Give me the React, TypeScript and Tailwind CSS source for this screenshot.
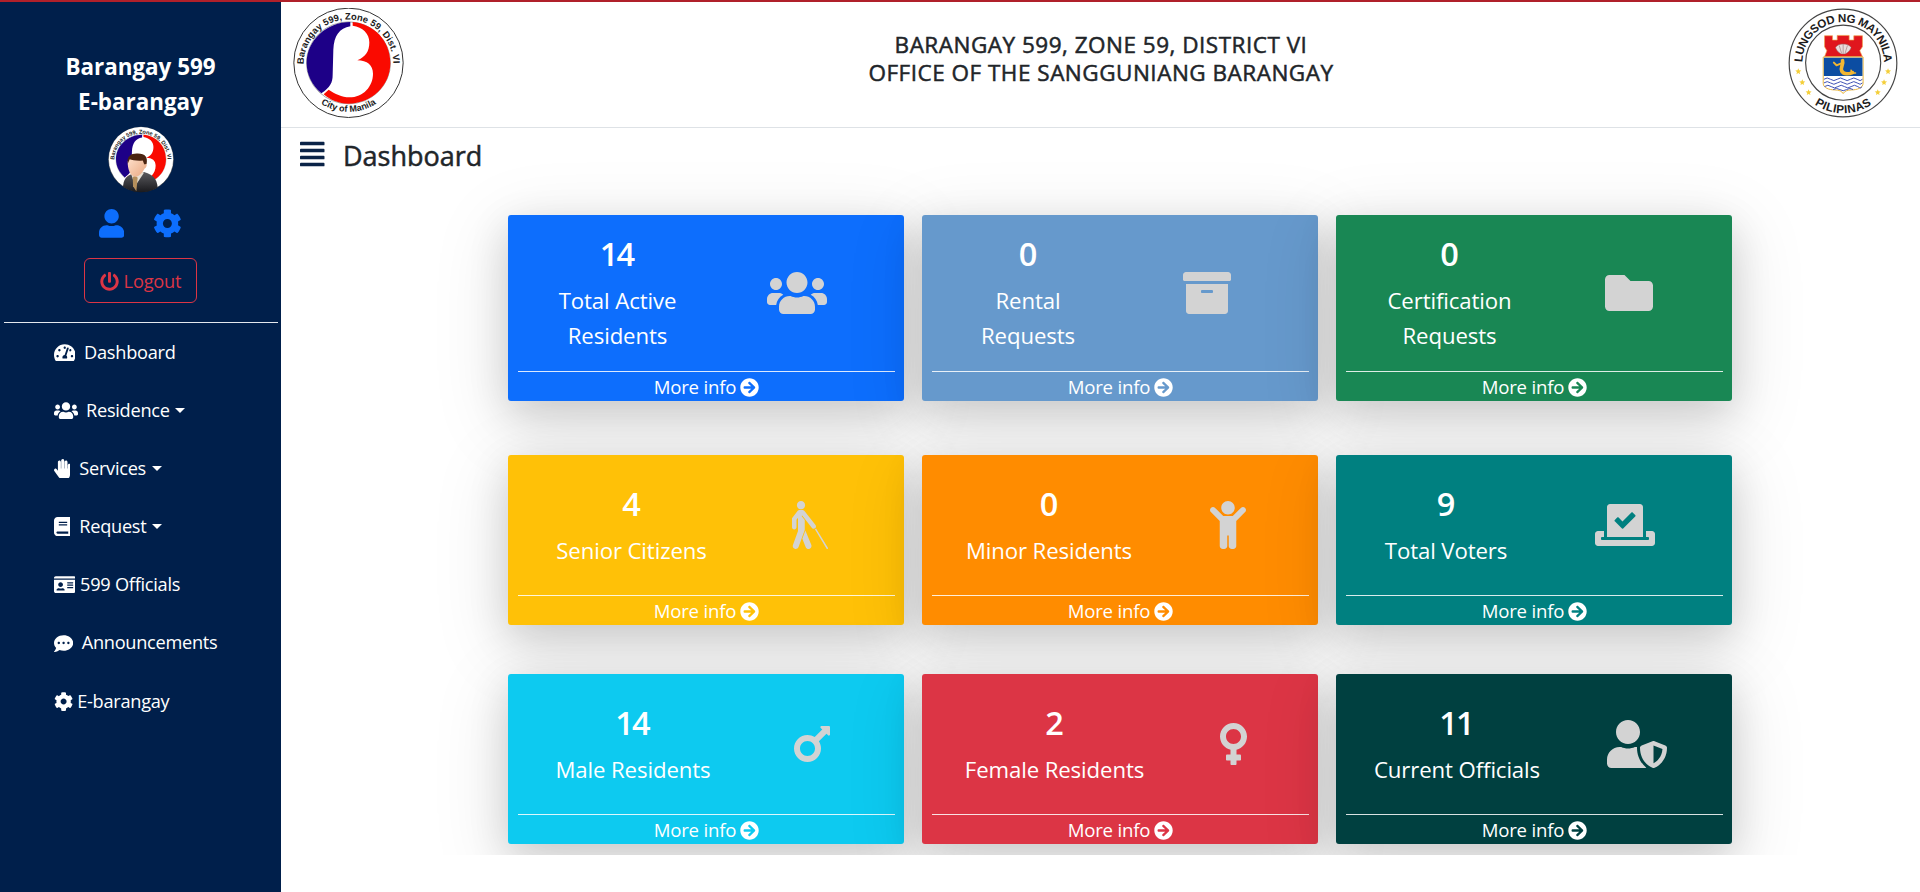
import type { ReactNode } from "react";
import type { IconType } from "react-icons";
import {
  FaAlignJustify,
  FaArchive,
  FaArrowCircleRight,
  FaBlind,
  FaBook,
  FaChild,
  FaCog,
  FaCommentDots,
  FaFolder,
  FaHandPaper,
  FaIdCard,
  FaMars,
  FaPowerOff,
  FaTachometerAlt,
  FaUser,
  FaUserShield,
  FaUsers,
  FaVenus,
  FaVoteYea,
} from "react-icons/fa";

function BarangayEmblem() {
  return (
    <>
      <circle cx="205.5" cy="189.5" r="164" fill="#fff" stroke="#333" strokeWidth="3" />
      <ellipse cx="205.5" cy="189.5" rx="126" ry="123" fill="#fff" stroke="#555" strokeWidth="1.5" />
      <path
        d="M211 67 C140 67 80 122 80 190 C80 226 97 258 124 281 C150 262 158 250 158 225 L160 150 C162 108 178 86 211 80 Z"
        fill="#1d0087"
      />
      <path
        d="M218 67 C280 72 331 122 331 190 C331 258 275 312 205 312 C176 312 150 301 131 284 L146 270 C165 283 185 292 208 293 C250 293 279 260 279 222 C279 196 262 183 232 182 C256 172 268 156 268 128 C268 102 248 82 218 78 Z"
        fill="#fa0a00"
      />
    </>
  );
}

function BarangayLogo() {
  return (
    <svg viewBox="39 25 333 330" className="h-[110px] w-[111px]">
      <BarangayEmblem />
      <path id="b-top" d="M71 194 A134.5 134.5 0 0 1 340 194" fill="none" />
      <path id="b-bottom" d="M96 290 A152 152 0 0 0 315 290" fill="none" />
      <g fontFamily="Liberation Sans, sans-serif" fontWeight="700" fontSize="28" fill="#222">
        <text>
          <textPath href="#b-top" textLength="420">Barangay 599, Zone 59, Dist. VI</textPath>
        </text>
        <text textAnchor="middle" fontSize="27">
          <textPath href="#b-bottom" startOffset="50%">City of Manila</textPath>
        </text>
      </g>
    </svg>
  );
}

function Avatar() {
  return (
    <svg viewBox="322 378 198 202" className="h-[67px] w-[66px]">
      <defs>
        <clipPath id="avatar-clip">
          <circle cx="421" cy="479" r="99" />
        </clipPath>
        <linearGradient id="suit" x1="0" y1="0" x2="0" y2="1">
          <stop offset="0" stopColor="#5a5a5e" />
          <stop offset="1" stopColor="#17171b" />
        </linearGradient>
        <linearGradient id="skin" x1="0" y1="0" x2="1" y2="1">
          <stop offset="0" stopColor="#ffe3cf" />
          <stop offset="1" stopColor="#e9a67f" />
        </linearGradient>
      </defs>
      <g clipPath="url(#avatar-clip)">
        <g transform="translate(297.7 364.3) scale(0.6)">
          <BarangayEmblem />
        </g>
        <path id="a-top" d="M341 480 A80 79 0 0 1 501 480" fill="none" />
        <text fontFamily="Liberation Sans, sans-serif" fontWeight="700" fontSize="17" fill="#222">
          <textPath href="#a-top" textLength="248">Barangay 599, Zone 59, Dist. VI</textPath>
        </text>
        <path d="M366 580 C366 545 370 530 397 522 L430 517 C462 527 472 540 472 580 Z" fill="url(#suit)" />
        <path d="M392 524 L403 560 L430 519 L415 512 Z" fill="#e8e0d4" />
        <path d="M396 532 L404 528 L411 534 L407 575 L397 560 Z" fill="#b58f5c" />
        <path
          d="M381 484 C380 506 388 530 404 531 C418 530 428 514 432 506 C439 503 441 490 434 488 L428 470 L388 470 Z"
          fill="url(#skin)"
        />
        <path d="M381 492 C378 470 390 461 408 461 C434 460 442 472 438 492 L432 494 C428 490 429 486 426 482 C408 484 394 480 387 478 Z" fill="#4a2411" />
      </g>
    </svg>
  );
}

const STARS = [
  [85, 212],
  [97, 245],
  [116, 275],
  [355, 212],
  [343, 245],
  [324, 275],
];

function ManilaSeal() {
  return (
    <svg viewBox="54 22 331 330" className="h-[110px] w-[110px]">
      <circle cx="219.5" cy="187" r="162" fill="#fff" stroke="#444" strokeWidth="3.5" />
      <circle cx="220" cy="186" r="113" fill="#fff" stroke="#444" strokeWidth="3.5" />
      <path id="m-top" d="M97 187 A123 123 0 0 1 343 187" fill="none" />
      <path id="m-bottom" d="M108 289 A152 152 0 0 0 332 289" fill="none" />
      <g fontFamily="Liberation Sans, sans-serif" fontWeight="700" fontSize="35" fill="#1c1c1c">
        <text>
          <textPath href="#m-top" startOffset="2" textLength="383">LUNGSOD NG MAYNILA</textPath>
        </text>
        <text textAnchor="middle">
          <textPath href="#m-bottom" startOffset="50%" textLength="182">PILIPINAS</textPath>
        </text>
      </g>
      {STARS.map(([x, y]) => (
        <path
          key={`${x}-${y}`}
          transform={`translate(${x} ${y})`}
          d="M0 -9 L2.5 -3 L9 -2.5 L4 2 L5.5 8.5 L0 5 L-5.5 8.5 L-4 2 L-9 -2.5 L-2.5 -3 Z"
          fill="#f4cf3a"
        />
      ))}
      <path
        d="M164 168 L171 150 L164 138 V105 H188 V118 H202 V104 H238 V118 H252 V105 H278 V138 L270 150 L278 168 Z"
        fill="#e0161d"
        stroke="#f0a24a"
        strokeWidth="2"
      />
      <path
        d="M197 140 C205 126 235 126 244 140 C240 152 230 160 220 160 C210 160 201 152 197 140 Z"
        fill="#e9dcdc"
        stroke="#8c5a5a"
        strokeWidth="1.5"
      />
      <path d="M208 134 L215 157 M220 130 V159 M233 134 L226 157" stroke="#8c5a5a" strokeWidth="1.5" />
      <path
        d="M160 169 H280 V248 C280 262 262 268 245 268 C232 268 224 272 220 279 C216 272 208 268 195 268 C178 268 160 262 160 248 Z"
        fill="#fff"
        stroke="#e8b53c"
        strokeWidth="3"
      />
      <path d="M162 171 H278 V226 H162 Z" fill="#0c4da2" />
      <g fill="none" stroke="#f2b632" strokeLinecap="round" strokeLinejoin="round">
        <path d="M218 180 C222 192 210 200 216 212 C222 222 238 220 248 216" strokeWidth="11" />
        <path d="M214 188 L200 194 L192 186" strokeWidth="6" />
        <path d="M246 217 L244 209 M246 217 L257 217" strokeWidth="5" />
      </g>
      <g fill="none" stroke="#3f51b5" strokeWidth="3">
        <path d="M162 236 q10 -8 20 0 t20 0 t20 0 t20 0 t20 0 t16 0" />
        <path d="M162 247 q10 -8 20 0 t20 0 t20 0 t20 0 t20 0 t16 0" />
        <path d="M164 258 q10 -8 20 0 t20 0 t20 0 t20 0 t20 0 t12 0" />
        <path d="M190 267 q10 -7 20 0 t20 0 t20 0" />
      </g>
    </svg>
  );
}

type NavItem = { label: string; icon: IconType; size: string; caret?: boolean };

const NAV: NavItem[] = [
  { label: "Dashboard", icon: FaTachometerAlt, size: "w-[21.6px] mr-[9px]" },
  { label: "Residence", icon: FaUsers, size: "w-[24px] mr-[8.5px]", caret: true },
  { label: "Services", icon: FaHandPaper, size: "w-[16.8px] mr-[9px]", caret: true },
  { label: "Request", icon: FaBook, size: "w-[16.8px] mr-[9px]", caret: true },
  { label: "599 Officials", icon: FaIdCard, size: "w-[21.6px] mr-[5px]" },
  { label: "Announcements", icon: FaCommentDots, size: "w-[19.2px] mr-[9px]" },
  { label: "E-barangay", icon: FaCog, size: "w-[19.2px] mr-[4.5px]" },
];

function Sidebar() {
  return (
    <aside className="flex w-[281px] shrink-0 flex-col items-center bg-[#001f4b] pt-[47px] text-white">
      <div className="text-center text-[22.4px] leading-[35px] font-bold">
        <div>Barangay 599</div>
        <div>E-barangay</div>
      </div>
      <div className="mt-[7px]">
        <Avatar />
      </div>
      <div className="mt-[16px] flex gap-[29px] text-[#0d6efd]">
        <FaUser className="h-[28.8px] w-[25.2px]" />
        <FaCog className="h-[28.8px] w-[28.8px]" />
      </div>
      <button className="mt-[20px] flex h-[45px] w-[113px] items-center justify-center rounded-md border border-[#dc3545] pt-[2px] text-[18.2px] tracking-[-0.01em] text-[#dc3545]">
        <FaPowerOff className="size-[19px]" />
        <span className="ml-[5px]">Logout</span>
      </button>
      <div className="mt-[19px] h-px w-[274px] bg-[#e4e8ee]" />
      <nav className="flex w-full flex-col pt-[0.3px] pl-[53.5px]">
        {NAV.map(({ label, icon: Icon, size, caret }) => (
          <a key={label} className="flex h-[58.2px] items-center text-[18.2px] tracking-[-0.015em]">
            <Icon className={`h-[19.2px] shrink-0 ${size}`} />
            <span>{label}</span>
            {caret && (
              <span className="ml-[5.5px] border-x-[5.5px] border-t-[5.5px] border-x-transparent border-t-white" />
            )}
          </a>
        ))}
      </nav>
    </aside>
  );
}

type Stat = {
  value: string;
  label: ReactNode;
  icon: IconType;
  color: string;
  text: string;
  size: string;
};

const TOP: Stat[] = [
  { value: "14", label: <>Total Active<br />Residents</>, icon: FaUsers, color: "bg-[#0d6efd]", text: "w-[219px] pb-[2px]", size: "ml-[40px] w-[60px]" },
  { value: "0", label: <>Rental<br />Requests</>, icon: FaArchive, color: "bg-[#6699cc]", text: "w-[212px] pb-[2px]", size: "ml-[49px] w-[48px]" },
  { value: "0", label: <>Certification<br />Requests</>, icon: FaFolder, color: "bg-[#198754]", text: "w-[227px] pb-[2px]", size: "ml-[42px] w-[48px]" },
];

const MIDDLE: Stat[] = [
  { value: "4", label: "Senior Citizens", icon: FaBlind, color: "bg-[#ffc107]", text: "w-[247px]", size: "ml-[37px] w-[36px]" },
  { value: "0", label: "Minor Residents", icon: FaChild, color: "bg-[#ff8c00]", text: "w-[254px]", size: "ml-[34px] w-[36px]" },
  { value: "9", label: "Total Voters", icon: FaVoteYea, color: "bg-[#008080]", text: "w-[220px]", size: "ml-[39px] w-[60px]" },
];

const BOTTOM: Stat[] = [
  { value: "14", label: "Male Residents", icon: FaMars, color: "bg-[#0dcaf0]", text: "w-[250px]", size: "ml-[36px] w-[36px]" },
  { value: "2", label: "Female Residents", icon: FaVenus, color: "bg-[#dc3545]", text: "w-[265px]", size: "ml-[33px] w-[27px]" },
  { value: "11", label: "Current Officials", icon: FaUserShield, color: "bg-[#004040]", text: "w-[242px]", size: "ml-[29px] w-[60px]" },
];

function StatCard({ value, label, icon: Icon, color, text, size }: Stat) {
  return (
    <div
      className={`relative flex w-[396px] flex-col rounded-[3px] text-white shadow-[0_12px_40px_rgba(0,0,0,0.14),0_18px_72px_8px_rgba(0,0,0,0.1)] ${color}`}
    >
      <div className="flex flex-1 items-center">
        <div className={`text-center ${text}`}>
          <div className="mb-[7px] pr-[2px] text-[32.5px] leading-[44px] font-semibold tracking-[-0.06em]">{value}</div>
          <div className="text-[22.2px] leading-[35px] tracking-[-0.005em] whitespace-nowrap">{label}</div>
        </div>
        <Icon className={`h-[48px] shrink-0 text-[#d3d3d3] ${size}`} />
      </div>
      <div className="mr-[9px] ml-[10px] flex h-[30px] items-center justify-center border-t border-white/85 text-[18.6px] tracking-[-0.01em]">
        <span>More info</span>
        <FaArrowCircleRight className="mt-px ml-[4px] size-[19px]" />
      </div>
    </div>
  );
}

function StatRow({ stats, height }: { stats: Stat[]; height: string }) {
  return (
    <div className={`flex gap-[18px] ${height}`}>
      {stats.map((s) => (
        <StatCard key={s.color} {...s} />
      ))}
    </div>
  );
}

export default function App() {
  return (
    <div className="flex h-[892px] w-[1920px] flex-col overflow-hidden bg-white font-['Open_Sans','Noto_Sans',sans-serif] text-[#212529]">
      <div className="h-[2px] shrink-0 bg-[#b0202a]" />
      <div className="flex flex-1">
        <Sidebar />
        <main className="flex flex-1 flex-col">
          <header className="flex h-[126px] shrink-0 items-start justify-between border-b border-[#dee2e6] pt-[6px] pr-[22px] pl-[12px]">
            <BarangayLogo />
            <h1 className="pt-[23px] pl-[10px] text-center text-[22.5px] leading-[28px] tracking-[0.5px] [-webkit-text-stroke:0.5px_#212529]">
              BARANGAY 599, ZONE 59, DISTRICT VI
              <br />
              OFFICE OF THE SANGGUNIANG BARANGAY
            </h1>
            <ManilaSeal />
          </header>
          <section className="flex h-[727px] shrink-0 flex-col overflow-hidden">
            <div className="flex items-center pt-[7px] pl-[19px]">
              <FaAlignJustify className="mb-[5px] h-[28px] w-[24.5px]" color="#0a2347" />
              <h2 className="ml-[18.5px] text-[27px] leading-[42px] [-webkit-text-stroke:0.5px_#212529]">Dashboard</h2>
            </div>
            <div className="flex flex-col pt-[38px] pl-[227px]">
              <StatRow stats={TOP} height="h-[186px]" />
              <div className="h-[54px]" />
              <StatRow stats={MIDDLE} height="h-[170px]" />
              <div className="h-[49px]" />
              <StatRow stats={BOTTOM} height="h-[170px]" />
            </div>
          </section>
        </main>
      </div>
    </div>
  );
}
